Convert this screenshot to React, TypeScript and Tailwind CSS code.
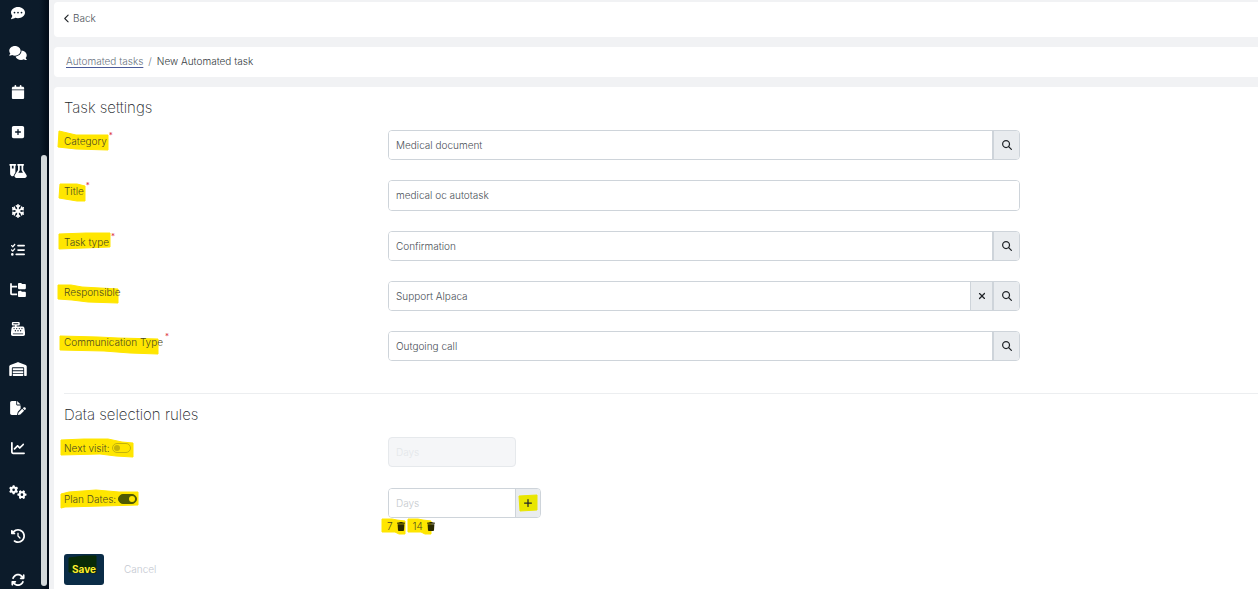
import { useState } from "react";
import type { ReactNode } from "react";
import type { IconType } from "react-icons";
import {
  FaArrowsRotate,
  FaCalendar,
  FaCashRegister,
  FaChartLine,
  FaChevronLeft,
  FaClockRotateLeft,
  FaCommentDots,
  FaComments,
  FaFilePen,
  FaFlaskVial,
  FaFolderTree,
  FaGears,
  FaListCheck,
  FaMagnifyingGlass,
  FaPlus,
  FaSnowflake,
  FaSquarePlus,
  FaTrash,
  FaWarehouse,
  FaXmark,
} from "react-icons/fa6";

type NavItem = { label: string; icon: IconType; width?: string };

const MAIN_NAV: NavItem[] = [
  { label: "Messages", icon: FaCommentDots },
  { label: "Chats", icon: FaComments, width: "w-[18px]" },
  { label: "Calendar", icon: FaCalendar },
  { label: "Add", icon: FaSquarePlus },
  { label: "Laboratory", icon: FaFlaskVial, width: "w-[18px]" },
  { label: "Cryo storage", icon: FaSnowflake },
  { label: "Tasks", icon: FaListCheck },
  { label: "Catalogs", icon: FaFolderTree, width: "w-4" },
  { label: "Cash desk", icon: FaCashRegister },
  { label: "Warehouse", icon: FaWarehouse, width: "w-[18px]" },
  { label: "Documents", icon: FaFilePen, width: "w-4" },
  { label: "Reports", icon: FaChartLine },
];

const SYSTEM_NAV: NavItem[] = [
  { label: "Settings", icon: FaGears, width: "w-[18px]" },
  { label: "History", icon: FaClockRotateLeft },
  { label: "Sync", icon: FaArrowsRotate },
];

type Field = {
  id: string;
  label: string;
  value: string;
  required?: boolean;
  lookup?: boolean;
  clearable?: boolean;
  mark: string;
};

const FIELDS: Field[] = [
  {
    id: "category",
    label: "Category",
    value: "Medical document",
    required: true,
    lookup: true,
    mark: "-5,-2 12,2 44,2 44,17 12,16 -6,14",
  },
  {
    id: "title",
    label: "Title",
    value: "medical oc autotask",
    required: true,
    mark: "-4,1 13,1 21,3 21,18 13,18 -5,15",
  },
  {
    id: "taskType",
    label: "Task type",
    value: "Confirmation",
    required: true,
    lookup: true,
    mark: "-5,0 22,-1 46,-1 46,13 20,14 -5,15",
  },
  {
    id: "responsible",
    label: "Responsible",
    value: "Support Alpaca",
    lookup: true,
    clearable: true,
    mark: "-6,1 7,1 18,3 54,5 54,19 24,18 8,16 -6,15",
  },
  {
    id: "communicationType",
    label: "Communication Type",
    value: "Outgoing call",
    required: true,
    lookup: true,
    mark: "-4,2 34,3 54,4 94,5 94,20 66,19 40,17 -4,16",
  },
];

function Sidebar() {
  const link = ({ label, icon: Icon, width = "w-3.5" }: NavItem) => (
    <a key={label} href="#" aria-label={label} className="flex h-3.5 shrink-0 justify-center">
      <Icon className={`h-3.5 ${width}`} />
    </a>
  );

  return (
    <aside className="sticky top-0 flex h-screen w-[49px] shrink-0 overflow-hidden bg-gradient-to-r from-[#0c1b2a] from-80% to-[#020b17] text-white">
      <nav className="flex w-9 shrink-0 flex-col gap-[30px] pt-1.5">
        <div className="flex h-[449px] shrink-0 flex-col justify-between">{MAIN_NAV.map(link)}</div>
        {SYSTEM_NAV.map(link)}
      </nav>
      {/* scroll thumb */}
      <div className="mt-[155px] mb-[3px] ml-[5px] w-1.5 rounded-full bg-[#d3d9db]" />
    </aside>
  );
}

/* marker stroke, drawn under the text it belongs to */
function Mark({ points, fill = "#ffe600" }: { points: string; fill?: string }) {
  return (
    <svg className="absolute inset-0 h-full w-full overflow-visible" aria-hidden="true">
      <polygon points={points} fill={fill} stroke={fill} strokeLinejoin="round" />
    </svg>
  );
}

function FieldRow({ children }: { children: ReactNode }) {
  return (
    <div className="grid grid-cols-[324px_minmax(0,632px)] items-start">{children}</div>
  );
}

function Addon({ label, className, children }: { label: string; className: string; children: ReactNode }) {
  return (
    <button
      type="button"
      aria-label={label}
      className={`flex shrink-0 items-center justify-center border-[#ced4da] bg-[#e9ecef] text-[#212529] ${className}`}
    >
      {children}
    </button>
  );
}

function SettingField({ field }: { field: Field }) {
  const [value, setValue] = useState(field.value);

  return (
    <FieldRow>
      <label htmlFor={field.id} className="relative mt-[3px] w-fit leading-4 text-[#4d4a22]">
        <Mark points={field.mark} />
        <span className="relative">{field.label}</span>
        {field.required && (
          <span className="absolute -top-1.5 left-full ml-0.5 text-[8px] font-normal text-[#dc3545]">*</span>
        )}
      </label>
      <div
        className={`flex overflow-hidden rounded border border-[#ced4da] ${
          field.lookup ? "h-[30px]" : "h-[31px]"
        }`}
      >
        <input
          id={field.id}
          type="text"
          value={value}
          onChange={(e) => setValue(e.target.value)}
          className="min-w-0 flex-1 bg-white px-[7px] outline-none"
        />
        {field.clearable && (
          <Addon label="Clear" className="w-[22px] border-l">
            <FaXmark className="size-[10px]" />
          </Addon>
        )}
        {field.lookup && (
          <Addon label="Search" className="w-[27px] border-l-2">
            <FaMagnifyingGlass className="size-[10px]" />
          </Addon>
        )}
      </div>
    </FieldRow>
  );
}

function Toggle({ id, checked, onChange }: { id: string; checked: boolean; onChange: (v: boolean) => void }) {
  return (
    <input
      id={id}
      type="checkbox"
      role="switch"
      checked={checked}
      onChange={(e) => onChange(e.target.checked)}
      className="relative flex h-[10px] w-[19px] appearance-none items-center rounded-full border border-[#c4b30a] px-px before:size-1.5 before:rounded-full before:bg-[#c4b30a] checked:justify-end checked:border-[#4f5a04] checked:bg-[#4f5a04] checked:before:bg-[#ffe600]"
    />
  );
}

export default function App() {
  const [nextVisit, setNextVisit] = useState(false);
  const [planDates, setPlanDates] = useState(true);
  const [days, setDays] = useState([7, 14]);

  return (
    <div className="flex min-h-screen bg-[#f1f2f4] font-['Inter',sans-serif] text-[10px] font-light text-[#4a4f57]">
      <Sidebar />

      <div className="flex min-w-0 flex-1 flex-col gap-[10px] pt-0.5 pl-[5px]">
        <header className="flex h-[35px] items-center rounded-l bg-white px-[10px] pb-0.5">
          <a href="#" className="flex items-center gap-[3px]">
            <FaChevronLeft className="h-[9px] w-1.5 text-[#212529]" />
            Back
          </a>
        </header>

        <nav className="flex h-[30px] items-center gap-[5px] rounded-l bg-white px-3 pb-0.5" aria-label="Breadcrumb">
          <a href="#" className="text-[#6b7480] underline decoration-[#4a5a98] underline-offset-2">
            Automated tasks
          </a>
          <span className="text-[#6c757d]">/</span>
          <span className="text-[#343a40]">New Automated task</span>
        </nav>

        <main className="flex-1 rounded-tl bg-white pl-[10px]">
          <form onSubmit={(e) => e.preventDefault()}>
            <section className="border-b border-[#eceef0] pt-[11px] pb-8">
              <h2 className="mb-3 text-[15px] leading-5 font-extralight text-[#212529]">Task settings</h2>
              <div className="flex flex-col gap-5">
                {FIELDS.map((f) => (
                  <SettingField key={f.id} field={f} />
                ))}
              </div>
            </section>

            <section className="pt-[11px]">
              <h2 className="mb-3 text-[15px] leading-5 font-extralight text-[#212529]">
                Data selection rules
              </h2>
              <FieldRow>
                <div className="relative mt-[3px] flex w-fit items-center gap-0.5 leading-4 text-[#4d4a22]">
                  <Mark points="-3,0 20,-1 44,-1 58,2 69,3 69,17 52,16 36,14 -3,15" />
                  <label htmlFor="nextVisit" className="relative">
                    Next visit:
                  </label>
                  <Toggle id="nextVisit" checked={nextVisit} onChange={setNextVisit} />
                </div>
                <input
                  type="text"
                  aria-label="Next visit days"
                  placeholder="Days"
                  disabled={!nextVisit}
                  className="h-[30px] w-32 rounded border border-[#ced4da] bg-white px-[7px] outline-none placeholder:text-[#c5c9cd] disabled:border-[#e6e9ec] disabled:bg-[#f5f6f8] disabled:placeholder:text-[#e3e6e9]"
                />
              </FieldRow>

              <div className="mt-[21px]">
                <FieldRow>
                  <div className="relative mt-[3px] flex w-fit items-center gap-0.5 leading-4 text-[#4d4a22]">
                    <Mark points="-3,3 5,1 32,-1 55,1 74,1 74,14 38,15 1,16 -3,17" />
                    <label htmlFor="planDates" className="relative">
                      Plan Dates:
                    </label>
                    <Toggle id="planDates" checked={planDates} onChange={setPlanDates} />
                  </div>
                  <div>
                    <div className="flex h-[30px] w-[153px] overflow-hidden rounded border border-[#ced4da]">
                      <input
                        type="text"
                        aria-label="Plan dates days"
                        placeholder="Days"
                        className="min-w-0 flex-1 bg-white px-[7px] outline-none placeholder:text-[#c5c9cd]"
                      />
                      <Addon label="Add days" className="w-[25px] border-l">
                        <span className="relative flex h-4 w-[18px] items-center justify-center">
                          <Mark points="0,1 18,0 18,15 1,16" fill="#e9e600" />
                          <FaPlus className="relative size-[10px]" />
                        </span>
                      </Addon>
                    </div>
                    <ul className="-ml-[7px] flex gap-0.5">
                      {days.map((d) => (
                        <li
                          key={d}
                          className="relative flex h-4 items-center gap-1 pl-[6px] leading-4 text-[#4d4a22]"
                        >
                          <Mark points="1,1 11,1 16,2 24,3 24,16 18,16 14,14 1,14" />
                          <span className="relative">{d}</span>
                          <button
                            type="button"
                            aria-label={`Delete ${d}`}
                            onClick={() => setDays(days.filter((x) => x !== d))}
                            className="relative"
                          >
                            <FaTrash className="h-[9px] w-2 text-[#2a2900]" />
                          </button>
                        </li>
                      ))}
                    </ul>
                  </div>
                </FieldRow>
              </div>

              <div className="mt-5 flex items-center gap-5">
                <button
                  type="submit"
                  className="relative h-[31px] w-10 rounded-[3px] bg-[#0a2c47] font-bold text-[#ffee2e]"
                >
                  <Mark points="5,4 20,2 32,2 32,19 5,18" fill="#092a08" />
                  <span className="relative">Save</span>
                </button>
                <button type="button" className="text-[#c3c7d0]">
                  Cancel
                </button>
              </div>
            </section>
          </form>
        </main>
      </div>
    </div>
  );
}
